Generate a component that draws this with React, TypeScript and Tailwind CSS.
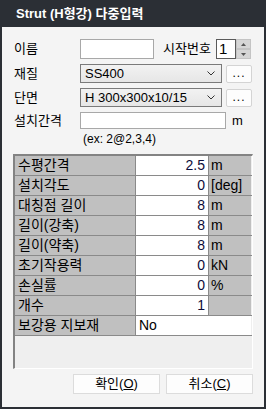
import React from "react";

const F = "font-['Liberation_Sans','Noto_Sans_CJK_KR',sans-serif]";

function Chevron() {
  return (
    <svg width="8" height="5" viewBox="0 0 8 5" className="shrink-0">
      <path d="M0.5 0.5 L4 4 L7.5 0.5" fill="none" stroke="#333" strokeWidth="1" />
    </svg>
  );
}

function Combo({ text }: { text: string }) {
  return (
    <div className="w-[142px] h-[19px] border border-[#7a7a7a] bg-gradient-to-b from-[#f2f2f2] to-[#e6e6e6] flex items-center pl-[4px] pr-[6px]">
      <span className="flex-1 text-[13px] leading-[17px] text-black">{text}</span>
      <Chevron />
    </div>
  );
}

function DotBtn() {
  return (
    <div className="ml-[4px] w-[26px] h-[18px] border border-[#d4d4d4] bg-[#fdfdfd] rounded-[2px] flex items-end justify-center pb-[3px]">
      <span className="text-[12px] leading-[12px] text-black tracking-[1px]">...</span>
    </div>
  );
}

type Row = { label: string; value: string; unit?: string; wide?: boolean };

const rows: Row[] = [
  { label: "수평간격", value: "2.5", unit: "m" },
  { label: "설치각도", value: "0", unit: "[deg]" },
  { label: "대칭점 길이", value: "8", unit: "m" },
  { label: "길이(강축)", value: "8", unit: "m" },
  { label: "길이(약축)", value: "8", unit: "m" },
  { label: "초기작용력", value: "0", unit: "kN" },
  { label: "손실률", value: "0", unit: "%" },
  { label: "개수", value: "1", unit: "" },
  { label: "보강용 지보재", value: "No", wide: true },
];

export default function App() {
  return (
    <div className={`${F} w-[266px] h-[409px] bg-[#2b2f35] flex flex-col`}>
      <div className="h-[27px] shrink-0 flex items-center pl-[16px]">
        <span className="text-white font-bold text-[13px] leading-[16px]">Strut (H형강) 다중입력</span>
      </div>
      <div className="flex-1 mx-[2px] mb-[2px] bg-[#f4f4f4] pl-[12px] pr-[11px] pt-[12px] flex flex-col text-black">
        {/* row 1 */}
        <div className="flex items-center h-[20px]">
          <span className="w-[66px] text-[13px] leading-[20px]">이름</span>
          <div className="w-[74px] h-[20px] border border-[#a8a8a8] bg-white" />
          <span className="ml-[9px] w-[53px] text-[13px] leading-[20px]">시작번호</span>
          <div className="w-[20px] h-[20px] border border-[#5a5a5a] bg-white text-[15px] leading-[18px] pl-[2px]">1</div>
          <div className="w-[15px] h-[20px] flex flex-col">
            <div className="flex-1 bg-[#d6d6d6] border border-[#c4c4c4] flex items-center justify-center">
              <svg width="5" height="3" viewBox="0 0 5 3"><path d="M0 3 L2.5 0 L5 3 Z" fill="#555" /></svg>
            </div>
            <div className="flex-1 bg-[#d6d6d6] border border-[#c4c4c4] flex items-center justify-center">
              <svg width="5" height="3" viewBox="0 0 5 3"><path d="M0 0 L2.5 3 L5 0 Z" fill="#555" /></svg>
            </div>
          </div>
        </div>
        {/* row 2 */}
        <div className="flex items-center mt-[5px]">
          <span className="w-[66px] text-[13px] leading-[19px]">재질</span>
          <Combo text="SS400" />
          <DotBtn />
        </div>
        {/* row 3 */}
        <div className="flex items-center mt-[5px]">
          <span className="w-[66px] text-[13px] leading-[19px]">단면</span>
          <Combo text="H 300x300x10/15" />
          <DotBtn />
        </div>
        {/* row 4 */}
        <div className="flex items-center mt-[5px]">
          <span className="w-[66px] text-[13px] leading-[17px]">설치간격</span>
          <div className="w-[146px] h-[17px] border border-[#a8a8a8] bg-white" />
          <span className="ml-[6px] text-[13px] leading-[17px]">m</span>
        </div>
        <div className="pl-[69px] mt-[3px] text-[12px] leading-[14px]">(ex: 2@2,3,4)</div>
        {/* grid */}
        <div className="mt-[8px] -ml-[1px] w-[240px] h-[215px] border-t-2 border-l-2 border-t-[#838383] border-l-[#838383] border-r border-b border-r-white border-b-white bg-[#efefef] flex flex-col">
          {rows.map((r) => (
            <div key={r.label} className="flex h-[20px] border-b border-[#8a8a8a]">
              <div className="w-[121px] h-[19px] bg-[#c0c0c0] border-r border-[#8a8a8a] pl-[3px] text-[14px] leading-[19px]">{r.label}</div>
              {r.wide ? (
                <div className="w-[115px] h-[19px] bg-white pl-[3px] text-[14px] leading-[19px]">{r.value}</div>
              ) : (
                <>
                  <div className="w-[73px] h-[19px] bg-white border-r border-[#8a8a8a] pr-[3px] text-right text-[14px] leading-[19px] text-[#0b0b3a]">{r.value}</div>
                  <div className="w-[42px] h-[19px] bg-[#c0c0c0] pl-[2px] text-[14px] leading-[19px]">{r.unit}</div>
                </>
              )}
            </div>
          ))}
        </div>
        {/* buttons */}
        <div className="mt-[5px] flex justify-end gap-[6px]">
          <div className="w-[87px] h-[20px] border border-[#dcdcdc] bg-[#fdfdfd] flex items-center justify-center text-[13px] leading-[18px]">
            확인(<span className="underline">O</span>)
          </div>
          <div className="w-[87px] h-[20px] border border-[#dcdcdc] bg-[#fdfdfd] flex items-center justify-center text-[13px] leading-[18px]">
            취소(<span className="underline">C</span>)
          </div>
        </div>
      </div>
    </div>
  );
}
